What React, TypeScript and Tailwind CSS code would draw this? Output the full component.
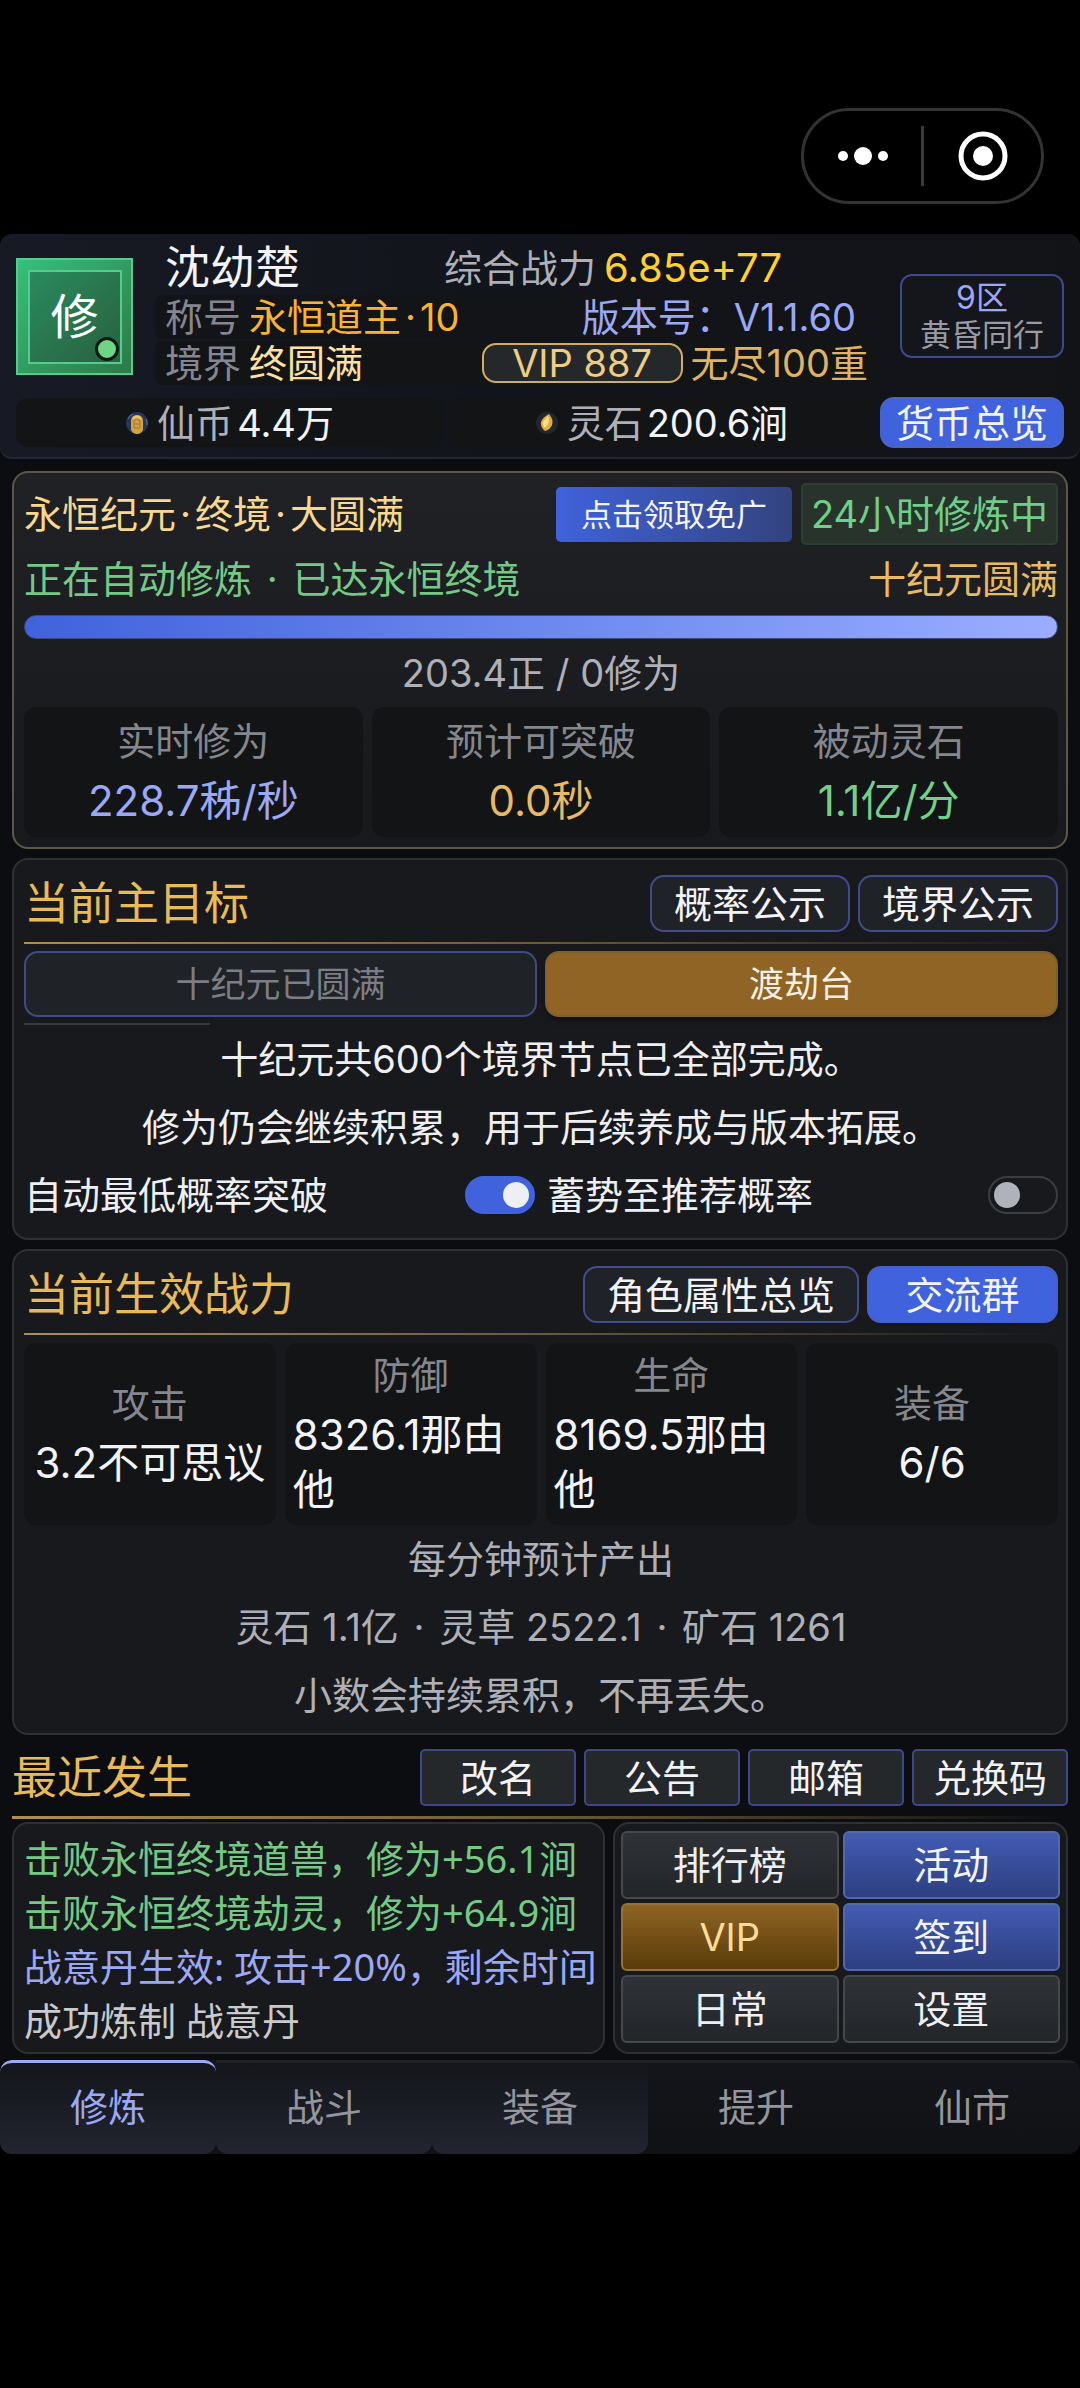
import { useState } from "react";
import type { ReactNode } from "react";

const sub = "text-[38px] leading-[48px]";

function Dot() {
  return <span className="inline-block w-[19px] text-center">·</span>;
}

function Capsule() {
  return (
    <div className="flex h-24 w-[243px] items-center rounded-full border-[3px] border-[#333333]">
      <button aria-label="更多" className="flex h-full flex-1 items-center justify-center">
        <svg width="52" height="20" viewBox="0 0 52 20" fill="#ffffff">
          <circle cx="6" cy="10" r="5" />
          <circle cx="26" cy="10" r="9" />
          <circle cx="46" cy="10" r="5" />
        </svg>
      </button>
      <span className="h-[60px] w-[3px] bg-[#3a3a3a]" />
      <button aria-label="关闭" className="flex h-full flex-1 items-center justify-center">
        <svg width="50" height="50" viewBox="0 0 50 50">
          <circle cx="25" cy="25" r="22" fill="none" stroke="#ffffff" strokeWidth="5" />
          <circle cx="25" cy="25" r="10" fill="#ffffff" />
        </svg>
      </button>
    </div>
  );
}

function CoinIcon() {
  return (
    <svg width="24" height="24" viewBox="0 0 24 24">
      <circle cx="12" cy="12" r="11" fill="#26365a" />
      <path d="M3 8a10 10 0 0 1 5-5M21 8a10 10 0 0 1 1 6" stroke="#5d7299" strokeWidth="1" fill="none" />
      <path d="M6 9 Q7 4 12 4 Q17 4 18 9 L18 19 Q16 23 12 23 Q8 23 6 19 Z" fill="#d3a244" />
      <path d="M9 9h6M9 13h6M9 17h6M9 9v8M15 9v8" stroke="#a8752a" strokeWidth="1" fill="none" />
      <path d="M8 8 Q12 3 16 8" stroke="#efc871" strokeWidth="2" fill="none" />
    </svg>
  );
}

function StoneIcon() {
  return (
    <svg width="24" height="24" viewBox="0 0 24 24">
      <circle cx="12" cy="12" r="11" fill="#22262d" />
      <path d="M14 3 Q19 9 17 14 Q15 19 10 20 Q5 16 6 11 Q8 6 14 3Z" fill="#e2ae42" />
      <path d="M13 5 Q16 11 10 17 Q7 14 8 11Z" fill="#ffdf86" />
    </svg>
  );
}

function Header() {
  return (
    <header className="rounded-xl border-b-2 border-[#252834] bg-gradient-to-r from-[#171a24] via-[#12141b] to-[#121317] px-4 pb-[9px] pt-3">
      <div className="flex">
        <div className="relative mt-3 flex size-[117px] shrink-0 items-center justify-center border-2 border-[#4fcf8c] bg-gradient-to-br from-[#36c07c] to-[#2c7a48]">
          <div className="flex size-[94px] items-center justify-center border-2 border-[#55cc8c] bg-gradient-to-br from-[#2a8a5e] to-[#27623f] text-5xl text-white">
            修
          </div>
          <span className="absolute bottom-3 right-3 size-6 rounded-full border-[3px] border-[#0c1a12] bg-[#6fd584]" />
        </div>
        <div className="ml-[22px] flex min-w-0 flex-1 flex-col">
          <div className="flex h-[43px] items-center pl-[10px]">
            <span className="w-[279px] text-[45px] leading-none text-[#f2f3f7]">沈幼楚</span>
            <span className="text-[38px] leading-none text-[#aeb0b8]">综合战力</span>
            <span className="ml-2 text-[40px] leading-none text-[#ffd02e]">6.85e+77</span>
          </div>
          <div className="mt-[6px] flex h-11 items-center justify-between rounded-lg bg-[#131418] pl-[10px] pr-5 text-[38px] leading-none">
            <span className="flex gap-2 text-[#85878e]">
              <span>称号</span>
              <span className="text-[#f9b233]">永恒道主<Dot />10</span>
            </span>
            <span className="text-[#9ba8f5]">版本号：V1.1.60</span>
          </div>
          <div className="mt-[2px] flex h-11 items-center rounded-lg bg-[#131416] pl-[10px] pr-2 text-[38px] leading-none">
            <span className="flex flex-1 gap-2 text-[#85878e]">
              <span>境界</span>
              <span className="text-[#ffe0a0]">终圆满</span>
            </span>
            <span className="flex h-10 w-[201px] items-center justify-center rounded-[14px] border-2 border-[#cfae63] bg-[#25282a] text-[#edcd82]">
              VIP 887
            </span>
            <span className="ml-2 text-[#dfb364]">无尽100重</span>
          </div>
        </div>
        <div className="ml-6 mt-7 flex h-[84px] w-[164px] shrink-0 flex-col items-center justify-center rounded-xl border-2 border-[#3e488c] bg-[#14161b]">
          <span className="text-[32px] leading-[37px] text-[#9ba8f5]">9区</span>
          <span className="text-[31px] leading-[37px] text-[#999ba2]">黄昏同行</span>
        </div>
      </div>
      <div className="mt-3 flex h-[51px] items-center gap-[5px] text-[38px] leading-none">
        <div className="flex h-[49px] flex-1 items-center justify-center rounded-xl bg-[#131416]">
          <CoinIcon />
          <span className="ml-2 text-[#aeb0b8]">仙币</span>
          <span className="ml-1 text-[#f2f3f7]">4.4万</span>
        </div>
        <div className="flex h-[49px] flex-1 items-center justify-center rounded-xl bg-[#131416]">
          <StoneIcon />
          <span className="ml-2 text-[#aeb0b8]">灵石</span>
          <span className="ml-1 text-[#f2f3f7]">200.6涧</span>
        </div>
        <button className="flex h-[51px] w-[184px] items-center justify-center rounded-[14px] border-2 border-[#4a63c4] bg-[#4062dc] text-[#f2f3f7]">
          货币总览
        </button>
      </div>
    </header>
  );
}

function StatBox({ label, value, tone }: { label: string; value: string; tone: string }) {
  return (
    <div className="flex min-h-[130px] flex-col items-center justify-center gap-2 rounded-xl bg-[#131416] p-2">
      <span className={`${sub} text-[#85878e]`}>{label}</span>
      <span className={`text-[42px] leading-[55px] ${tone}`}>{value}</span>
    </div>
  );
}

function OutlineButton({ children }: { children: ReactNode }) {
  return (
    <button className="flex h-[57px] items-center justify-center rounded-[14px] border-2 border-[#424c8c] bg-[#1f2226] px-[22px] text-[38px] leading-none text-[#f2f3f7]">
      {children}
    </button>
  );
}

function Rule({ thick }: { thick?: boolean }) {
  return (
    <div
      className={`bg-gradient-to-r from-[#b08f4c] via-[#6b5a38] to-transparent ${thick ? "h-[3px]" : "h-[2px]"}`}
    />
  );
}

const card = "rounded-[16px] border-2 border-[#2e3134] bg-[#18191c] pl-[10px] pr-2";

function Cultivation() {
  return (
    <section className="rounded-[16px] border-2 border-[#5c5747] bg-gradient-to-b from-[#202124] to-[#18191c] py-[10px] pl-[10px] pr-2">
      <div className="flex items-center">
        <h2 className="flex-1 text-[38px] leading-none text-[#f8d890]">
          永恒纪元<Dot />终境<Dot />大圆满
        </h2>
        <button className="flex h-[55px] w-[236px] items-center justify-center rounded-[5px] bg-gradient-to-r from-[#4062dc] to-[#32437f] text-[31px] leading-none text-[#f2f3f7]">
          点击领取免广
        </button>
        <span className="ml-[9px] flex h-[62px] w-[257px] items-center justify-center rounded-[5px] border-2 border-[#2e4034] bg-[#28332c] text-[38px] leading-none text-[#6fcf88]">
          24小时修炼中
        </span>
      </div>
      <div className="mt-[10px] flex h-12 items-center justify-between text-[38px] leading-none">
        <span className="whitespace-pre text-[#74c987]">
          正在自动修炼 <Dot /> 已达永恒终境
        </span>
        <span className="text-[#e8ba66]">十纪元圆满</span>
      </div>
      <div
        role="progressbar"
        aria-label="修为进度"
        className="mt-3 h-6 rounded-full border border-[#3f4a7c] bg-gradient-to-r from-[#4062dc] to-[#9badff]"
      />
      <p className="flex h-[68px] items-center justify-center text-[38px] leading-none text-[#aeb0b8]">203.4正 / 0修为</p>
      <div className="grid grid-cols-3 gap-[9px]">
        <StatBox label="实时修为" value="228.7秭/秒" tone="text-[#9ba8f5]" />
        <StatBox label="预计可突破" value="0.0秒" tone="text-[#e8ba66]" />
        <StatBox label="被动灵石" value="1.1亿/分" tone="text-[#74cf88]" />
      </div>
    </section>
  );
}

function Toggle({ label, initial }: { label: string; initial: boolean }) {
  const [on, setOn] = useState(initial);
  return (
    <label className="relative flex flex-1 cursor-pointer items-center justify-between">
      <span className="text-[38px] leading-none text-[#eeeff2]">{label}</span>
      <input
        type="checkbox"
        role="switch"
        className="peer sr-only"
        checked={on}
        onChange={(e) => setOn(e.target.checked)}
      />
      <span
        className={`flex h-[38px] w-[70px] items-center rounded-full border-2 px-1 ${
          on ? "justify-end border-[#4062dc] bg-[#4062dc]" : "justify-start border-[#3a3d42] bg-[#18191c]"
        }`}
      >
        <span className={`size-[26px] rounded-full ${on ? "bg-[#eeeff2]" : "bg-[#b0b2ba]"}`} />
      </span>
    </label>
  );
}

function Goal() {
  return (
    <section className={`${card} mt-[9px] pb-[9px] pt-[15px]`}>
      <div className="flex items-center gap-2">
        <h2 className="flex-1 text-[45px] leading-[57px] text-[#e8ba58]">当前主目标</h2>
        <OutlineButton>概率公示</OutlineButton>
        <OutlineButton>境界公示</OutlineButton>
      </div>
      <div className="mt-[10px]">
        <Rule />
      </div>
      <div className="mt-[7px] grid grid-cols-2 gap-2 text-[35px] leading-none">
        <button
          disabled
          className="flex h-[66px] items-center justify-center rounded-[14px] border-2 border-[#3f4b82] bg-[#1f2226] text-[#7c7e84]"
        >
          十纪元已圆满
        </button>
        <button className="flex h-[66px] items-center justify-center rounded-[14px] border-2 border-[#7d602f] bg-[#8f6424] text-[#f5efe2] shadow-md shadow-black/30">
          渡劫台
        </button>
      </div>
      <div className="mt-[6px] h-[2px] w-[186px] bg-[#37393d]" />
      <p className="text-center text-[38px] leading-[68px] text-[#eeeff2]">十纪元共600个境界节点已全部完成。</p>
      <p className="text-center text-[38px] leading-[68px] text-[#eeeff2]">修为仍会继续积累，用于后续养成与版本拓展。</p>
      <div className="flex h-[68px] items-center gap-3">
        <Toggle label="自动最低概率突破" initial={true} />
        <Toggle label="蓄势至推荐概率" initial={false} />
      </div>
    </section>
  );
}

function Power() {
  return (
    <section className={`${card} mt-[9px] pb-1 pt-[15px]`}>
      <div className="flex items-center gap-2">
        <h2 className="flex-1 text-[45px] leading-[57px] text-[#e8ba58]">当前生效战力</h2>
        <OutlineButton>角色属性总览</OutlineButton>
        <button className="flex h-[57px] w-[191px] items-center justify-center rounded-[14px] border-2 border-[#4560c8] bg-[#4062dc] text-[38px] leading-none text-[#f2f3f7]">
          交流群
        </button>
      </div>
      <div className="mt-[10px]">
        <Rule />
      </div>
      <div className="mt-2 grid grid-cols-4 gap-[9px]">
        <StatBox label="攻击" value="3.2不可思议" tone="text-[#f2f3f7]" />
        <StatBox label="防御" value="8326.1那由他" tone="text-[#f2f3f7]" />
        <StatBox label="生命" value="8169.5那由他" tone="text-[#f2f3f7]" />
        <StatBox label="装备" value="6/6" tone="text-[#f2f3f7]" />
      </div>
      <div className="text-center text-[38px] leading-[68px] text-[#aeb0b8]">
        <p>每分钟预计产出</p>
        <p>
          灵石 1.1亿 <Dot /> 灵草 2522.1 <Dot /> 矿石 1261
        </p>
        <p>小数会持续累积，不再丢失。</p>
      </div>
    </section>
  );
}

const gray = "border-[#45494c] bg-gradient-to-b from-[#2f3236] to-[#232629] text-[#eeeff2]";
const blue = "border-[#5468ae] bg-gradient-to-b from-[#435cb4] to-[#2e3f80] text-[#f2f3f7]";
const gold = "border-[#94713a] bg-gradient-to-b from-[#8f6424] to-[#5a3c0a] text-[#fbdc98]";

function Recent() {
  return (
    <section className="mt-[14px]">
      <div className="flex items-center">
        <h2 className="flex-1 text-[45px] leading-[57px] text-[#e8ba58]">最近发生</h2>
        <div className="grid w-[648px] grid-cols-4 gap-2">
          {["改名", "公告", "邮箱", "兑换码"].map((t) => (
            <button
              key={t}
              className="flex h-[57px] items-center justify-center rounded-[5px] border-2 border-[#3e4888] bg-[#25282b] text-[38px] leading-none text-[#f2f3f7]"
            >
              {t}
            </button>
          ))}
        </div>
      </div>
      <div className="mt-[10px]">
        <Rule thick />
      </div>
      <div className="mt-[3px] flex gap-2">
        <ul className="min-w-0 flex-1 whitespace-nowrap rounded-[16px] border-2 border-[#2e3134] bg-[#18191c] pl-[10px] pt-[7px] font-['Noto_Sans','Noto_Sans_CJK_SC',sans-serif] text-[38px] leading-[54px]">
          <li className="text-[#74c987]">击败永恒终境道兽，修为+56.1涧</li>
          <li className="text-[#74c987]">击败永恒终境劫灵，修为+64.9涧</li>
          <li className="text-[#9ba8f5]">战意丹生效: 攻击+20%，剩余时间</li>
          <li className="text-[#c9cacd]">成功炼制 战意丹</li>
        </ul>
        <div className="grid w-[455px] shrink-0 grid-cols-2 gap-1 rounded-[16px] border-2 border-[#2e3134] bg-[#18191c] px-[6px] pb-[9px] pt-[7px]">
          {[
            ["排行榜", gray],
            ["活动", blue],
            ["VIP", gold],
            ["签到", blue],
            ["日常", gray],
            ["设置", gray],
          ].map(([t, c]) => (
            <button
              key={t}
              className={`flex h-[68px] items-center justify-center rounded-[6px] border-2 text-[38px] leading-none ${c}`}
            >
              {t}
            </button>
          ))}
        </div>
      </div>
    </section>
  );
}

function Tabs() {
  const tabs = ["修炼", "战斗", "装备", "提升", "仙市"];
  return (
    <nav className="mt-[6px] grid grid-cols-5 overflow-hidden rounded-xl bg-gradient-to-b from-[#14161b] to-[#101114]">
      {tabs.map((t, i) => (
        <button
          key={t}
          aria-current={i === 0 ? "page" : undefined}
          className={`h-[94px] border-t-[3px] pb-[3px] text-[38px] leading-none ${
            i === 0
              ? "rounded-xl border-[#9ba8f5] bg-gradient-to-b from-[#14161b] to-[#222430] text-[#9ba8f5]"
              : i < 3
                ? "rounded-b-xl border-[#202226] bg-gradient-to-b from-[#14161b] to-[#222430] text-[#94969d]"
                : "border-[#202226] text-[#94969d]"
          }`}
        >
          {t}
        </button>
      ))}
    </nav>
  );
}

export default function App() {
  return (
    <div
      lang="zh-CN"
      className="min-h-screen bg-black font-['Inter','Noto_Sans_CJK_SC',sans-serif] text-[#f2f3f7]"
    >
      <div className="flex h-[234px] justify-end pr-9 pt-[108px]">
        <Capsule />
      </div>
      <main className="rounded-xl bg-[#0c0d11]">
        <Header />
        <div className="px-3 pt-3">
          <Cultivation />
          <Goal />
          <Power />
          <Recent />
        </div>
        <Tabs />
      </main>
    </div>
  );
}
